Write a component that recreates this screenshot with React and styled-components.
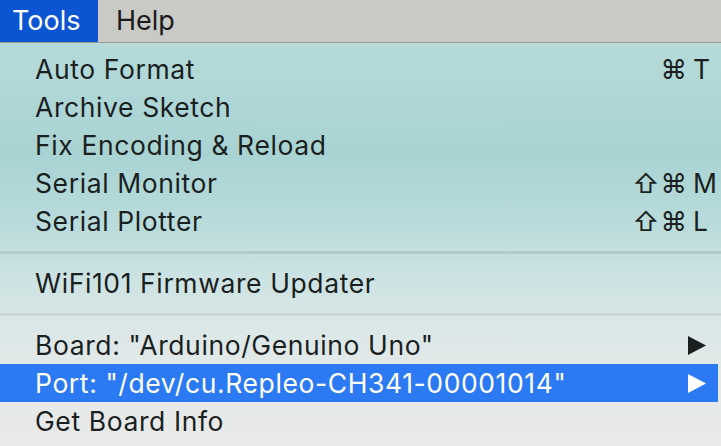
import React from 'react'
import styled, { createGlobalStyle } from 'styled-components'

const GlobalStyle = createGlobalStyle`
  html, body {
    margin: 0;
    padding: 0;
    width: 721px;
    height: 446px;
    overflow: hidden;
    font-family: Inter, "Liberation Sans", sans-serif;
    -webkit-font-smoothing: antialiased;
  }
`

const sections = [
  [
    { label: 'Auto Format', mods: '⌘', key: 'T' },
    { label: 'Archive Sketch' },
    { label: 'Fix Encoding & Reload' },
    { label: 'Serial Monitor', mods: '⇧⌘', key: 'M' },
    { label: 'Serial Plotter', mods: '⇧⌘', key: 'L' },
  ],
  [{ label: 'WiFi101 Firmware Updater' }],
  [
    { label: 'Board: "Arduino/Genuino Uno"', submenu: true },
    { label: 'Port: "/dev/cu.Repleo-CH341-00001014"', submenu: true, selected: true },
    { label: 'Get Board Info' },
  ],
]

export default function App() {
  return (
    <>
      <GlobalStyle />
      <Screen>
        <MenuBar>
          <MenuTitle active>Tools</MenuTitle>
          <MenuTitle>Help</MenuTitle>
        </MenuBar>
        <Menu>
          {sections.map((items, i) => (
            <React.Fragment key={i}>
              {i > 0 && <Separator $strong={i === 1} />}
              {items.map((item) => (
                <MenuItem key={item.label} $selected={item.selected}>
                  <Label>{item.label}</Label>
                  {item.key && (
                    <Shortcut>
                      <Mods>{item.mods}</Mods>
                      <Key>{item.key}</Key>
                    </Shortcut>
                  )}
                  {item.submenu && (
                    <Arrow viewBox="0 0 18 19">
                      <path d="M0 0 L18 9.5 L0 19 Z" fill="currentColor" />
                    </Arrow>
                  )}
                </MenuItem>
              ))}
            </React.Fragment>
          ))}
        </Menu>
      </Screen>
    </>
  )
}

const Screen = styled.div`
  width: 721px;
  height: 446px;
  display: flex;
  flex-direction: column;
  background: #e9e9e9;
`

const MenuBar = styled.div`
  height: 43px;
  display: flex;
  align-items: stretch;
  background: #c9c9c6;
  border-bottom: 1px solid #9c9c9a;
  box-sizing: border-box;
`

const MenuTitle = styled.div`
  display: flex;
  align-items: center;
  padding: 0 19px 2px 12px;
  width: ${(p) => (p.active ? '98px' : 'auto')};
  box-sizing: border-box;
  font-size: 27px;
  color: ${(p) => (p.active ? '#ffffff' : '#1b1b1b')};
  background: ${(p) => (p.active ? '#0c55d2' : 'transparent')};
  ${(p) => !p.active && 'padding-left: 18px;'}
`

const Menu = styled.div`
  flex: 1;
  display: flex;
  flex-direction: column;
  padding-top: 7px;
  background: linear-gradient(
    180deg,
    #b6dada 0px,
    #a9d3d3 110px,
    #b9dbdb 180px,
    #cbe2e2 230px,
    #dae7e7 280px,
    #e4e9e9 330px,
    #e9e9e9 403px
  );
`

const MenuItem = styled.div`
  height: 38px;
  flex: none;
  display: flex;
  align-items: center;
  padding: 0 12px 0 35px;
  margin-right: 3px;
  font-size: 26.5px;
  letter-spacing: 0.6px;
  color: ${(p) => (p.$selected ? '#ffffff' : '#1a1f1f')};
  background: ${(p) => (p.$selected ? '#2b7af4' : 'transparent')};
`

const Label = styled.span`
  flex: 1;
  white-space: nowrap;
`

const Shortcut = styled.span`
  display: grid;
  grid-template-columns: 90px 20px;
  margin-right: -7px;
  letter-spacing: 0;
`

const Mods = styled.span`
  text-align: right;
  padding-right: 5px;
  letter-spacing: 1px;
`

const Key = styled.span`
  text-align: left;
`

const Arrow = styled.svg`
  width: 18px;
  height: 19px;
  flex: none;
`

const Separator = styled.div`
  height: 24px;
  flex: none;
  display: flex;
  align-items: center;
  &::after {
    content: '';
    flex: 1;
    height: 3px;
    background: ${(p) => (p.$strong ? '#b2caca' : '#cfd5d5')};
  }
`
